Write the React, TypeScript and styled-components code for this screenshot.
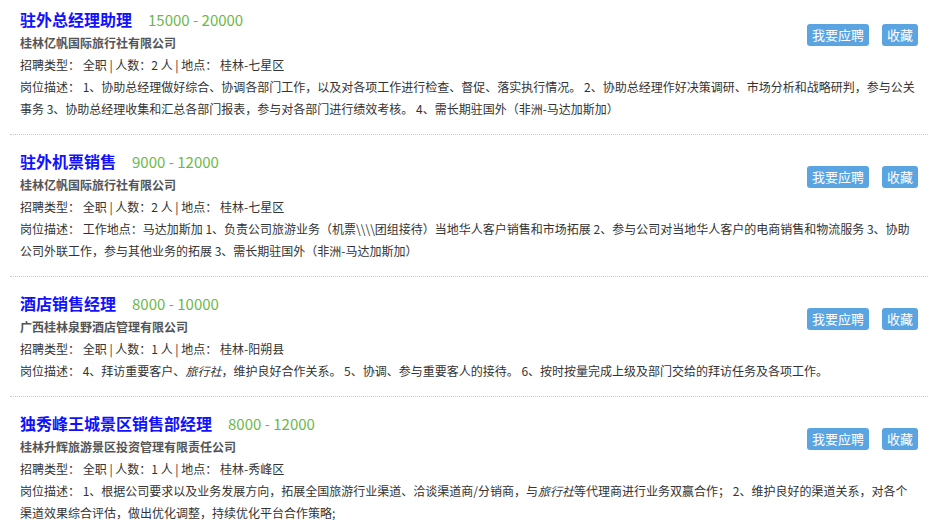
import styled, { createGlobalStyle } from "styled-components";

type Job = {
  title: string;
  salary: string;
  company: string;
  count: number;
  place: string;
  desc: React.ReactNode;
};

const jobs: Job[] = [
  {
    title: "驻外总经理助理",
    salary: "15000 - 20000",
    company: "桂林亿帆国际旅行社有限公司",
    count: 2,
    place: "桂林-七星区",
    desc: "1、协助总经理做好综合、协调各部门工作，以及对各项工作进行检查、督促、落实执行情况。 2、协助总经理作好决策调研、市场分析和战略研判，参与公关事务 3、协助总经理收集和汇总各部门报表，参与对各部门进行绩效考核。 4、需长期驻国外（非洲-马达加斯加）",
  },
  {
    title: "驻外机票销售",
    salary: "9000 - 12000",
    company: "桂林亿帆国际旅行社有限公司",
    count: 2,
    place: "桂林-七星区",
    desc: "工作地点：马达加斯加 1、负责公司旅游业务（机票\\\\\\\\团组接待）当地华人客户销售和市场拓展 2、参与公司对当地华人客户的电商销售和物流服务 3、协助公司外联工作，参与其他业务的拓展 3、需长期驻国外（非洲-马达加斯加）",
  },
  {
    title: "酒店销售经理",
    salary: "8000 - 10000",
    company: "广西桂林泉野酒店管理有限公司",
    count: 1,
    place: "桂林-阳朔县",
    desc: (
      <>
        4、拜访重要客户、<em>旅行社</em>，维护良好合作关系。 5、协调、参与重要客人的接待。 6、按时按量完成上级及部门交给的拜访任务及各项工作。
      </>
    ),
  },
  {
    title: "独秀峰王城景区销售部经理",
    salary: "8000 - 12000",
    company: "桂林升辉旅游景区投资管理有限责任公司",
    count: 1,
    place: "桂林-秀峰区",
    desc: (
      <>
        1、根据公司要求以及业务发展方向，拓展全国旅游行业渠道、洽谈渠道商/分销商，与<em>旅行社</em>等代理商进行业务双赢合作； 2、维护良好的渠道关系，对各个渠道效果综合评估，做出优化调整，持续优化平台合作策略;
      </>
    ),
  },
];

const GlobalStyle = createGlobalStyle`
  body {
    margin: 0;
    background: #fff;
    font-family: "Noto Sans CJK SC", "Noto Sans", sans-serif;
  }
`;

const List = styled.ul`
  list-style: none;
  margin: 0 8px 0 10px;
  padding: 0;
`;

const Item = styled.li`
  position: relative;
  padding: 14px 10px 14px 10px;
  border-bottom: 1px dotted #c8c8c8;
  &:first-child { padding-top: 7px; }
`;

const TitleRow = styled.div`
  display: flex;
  align-items: baseline;
  gap: 16px;
  height: 24px;
  line-height: 24px;
`;

const Title = styled.a`
  font-size: 16px;
  font-weight: 700;
  color: #1111ff;
  text-decoration: none;
`;

const Salary = styled.span`
  font-size: 15px;
  color: #6cb84a;
`;

const Company = styled.div`
  font-size: 12px;
  font-weight: 700;
  color: #555;
  line-height: 23px;
`;

const Line = styled.div`
  font-size: 12px;
  color: #333;
  line-height: 22px;
  em { font-style: italic; }
`;

const Actions = styled.div<{ $first: boolean }>`
  position: absolute;
  right: 10px;
  top: ${(p) => (p.$first ? 24 : 31)}px;
  display: flex;
  gap: 13px;
`;

const Btn = styled.button`
  height: 22px;
  padding: 0 5px;
  border: none;
  border-radius: 3px;
  background: #5aa5e1;
  color: #fff;
  font-family: "Noto Sans CJK SC", sans-serif;
  font-size: 13px;
  line-height: 22px;
  cursor: pointer;
`;

export default function App() {
  return (
    <>
      <GlobalStyle />
      <List>
        {jobs.map((j, i) => (
          <Item key={j.title}>
            <TitleRow>
              <Title href="#">{j.title}</Title>
              <Salary>{j.salary}</Salary>
            </TitleRow>
            <Company>{j.company}</Company>
            <Line>
              招聘类型：&nbsp;全职 | 人数：{j.count} 人 | 地点：&nbsp;{j.place}
            </Line>
            <Line>岗位描述：&nbsp;{j.desc}</Line>
            <Actions $first={i === 0}>
              <Btn>我要应聘</Btn>
              <Btn>收藏</Btn>
            </Actions>
          </Item>
        ))}
      </List>
    </>
  );
}
